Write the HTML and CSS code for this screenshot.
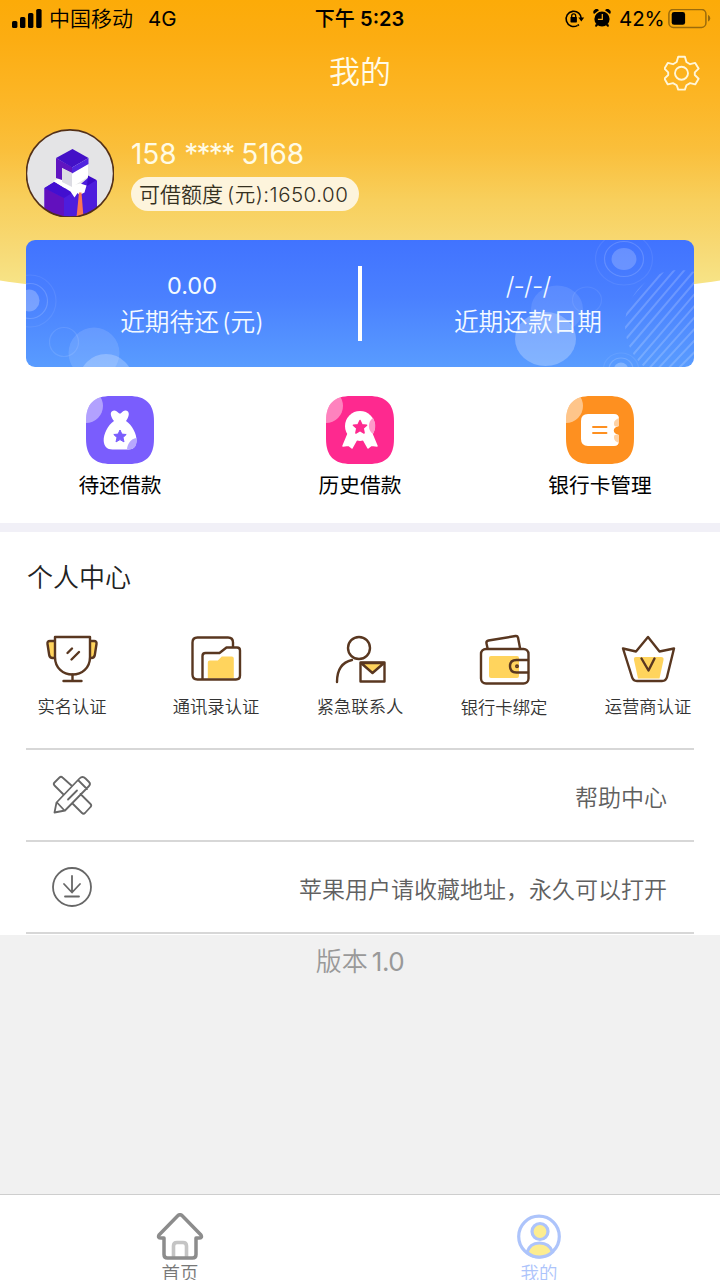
FILE: index.html
```html
<!DOCTYPE html>
<html lang="zh-CN">
<head>
<meta charset="utf-8">
<title>我的</title>
<link rel="stylesheet" href="styles.css">
</head>
<body>
<div class="screen">
  <header class="hero">
    <div class="status">
      <div class="status-left">
        <svg class="signal" viewBox="0 0 30 20"><rect x="0" y="12" width="5.400" height="7" rx="1.600"/><rect x="8" y="8" width="5.400" height="11" rx="1.600"/><rect x="16" y="4" width="5.400" height="15" rx="1.600"/><rect x="24.200" y="0" width="5.400" height="19" rx="1.600"/></svg>
        <span class="carrier">中国移动</span><span class="network">4G</span>
      </div>
      <div class="clock">下午 <b>5:23</b></div>
      <div class="status-right">
        <svg class="lock" viewBox="564 9 22 20"><path d="M577.300 25.600a7.600 7.600 0 1 1 4-6.500M579 24.600l-1.500.9" fill="none" stroke="#000" stroke-width="1.600"/><path d="M578.400 17.400h5.800l-2.900 4z"/><rect x="570.500" y="17" width="6.400" height="5.400" rx=".6"/><path d="M571.700 17.500v-1.600a2 2 0 0 1 4 0v1.600" fill="none" stroke="#000" stroke-width="1.300"/></svg>
        <svg class="alarm" viewBox="593 8.500 18 20"><circle cx="602" cy="18.500" r="7.600"/><path d="M594 13.500a3 3 0 0 1 5-3.700zM610 13.500a3 3 0 0 0-5-3.700zM596 23l2 2-2 1.600-1-1zM608 23l-2 2 2 1.600 1-1z"/><path d="M602.300 13.600v5.300h-4.400" fill="none" stroke="#fcae12" stroke-width="1.200"/></svg>
        <span class="percent">42%</span>
        <svg class="battery" viewBox="668 9 43 20"><rect x="668.900" y="9.400" width="37" height="18" rx="4.500" fill="none" stroke="#9b6b0b" stroke-width="1.500"/><rect x="671.700" y="12" width="13.400" height="12.800" rx="2.400"/><path d="M708 15v6.500c1.400-.6 2.200-1.800 2.200-3.200s-.8-2.700-2.200-3.300z" fill="#9b6b0b"/></svg>
      </div>
    </div>
    <div class="titlebar">
      <h1>我的</h1>
      <svg class="gear" viewBox="664 55 36 37"><g fill="none" stroke="#fff6d8" stroke-width="1.900" stroke-linejoin="round"><path d="M678.200 56.800h6.700l1.500 5.200 3.700 2.200 5.100-1.300 3.400 5.700-3.800 3.800v2.600l3.800 3.700-3.400 5.700-5.100-1.300-3.700 2.200-1.500 4.300h-6.700l-1.500-4.300-3.700-2.200-5.200 1.300-3.300-5.700 3.700-3.700v-2.600l-3.700-3.800 3.300-5.700 5.200 1.300 3.700-2.200z"/><circle cx="681.500" cy="73.200" r="6.500"/></g></svg>
    </div>
    <div class="profile">
      <svg class="avatar" viewBox="26 129 88 88"><defs><clipPath id="face"><circle cx="70" cy="173.500" r="44"/></clipPath></defs><g clip-path="url(#face)"><rect x="26" y="129" width="88" height="88" fill="#e4e4e6"/><path d="M44.500 188l10-6 10 6 14-2 10-8.500 8.500 3v38H44.500z" fill="#4d1ddd"/><path d="M44.500 188l19.500 10v20H44.500z" fill="#6210be"/><path d="M44.500 188l9.500-6 18 11-8 5z" fill="#420fd0"/><path d="M88 175.500l8.500 4.500-9.500 6z" fill="#3c0ac8"/><path d="M53.500 181l6-3 14 7 7-1.500 6 2-2 7-5 2.500-2-2-3 4.500-4-6z" fill="#fff"/><path d="M79 192.500h2.500l2 25h-7z" fill="#fb7652"/><path d="M56 158l16 9v6l-10-5v12l-6-2z" fill="#6015c0"/><path d="M62 168l10 5v14l-10-5z" fill="#dcdce3"/><path d="M72 173l16-9v13l-16 10z" fill="#fff"/><path d="M56 158l16.500-9 16 9-16.500 9.500z" fill="#4310c7"/><path d="M72 167.500l16.500-9.500v6L72 173.500z" fill="#5125df"/></g><circle cx="70" cy="173.500" r="43.600" fill="none" stroke="#543016" stroke-width="1.600"/></svg>
      <div class="identity">
        <div class="phone">158 <span class="mask">****</span> 5168</div>
        <div class="quota"><span>可借额度</span><span class="quota-num">(元):1650.00</span></div>
      </div>
    </div>
  </header>

  <section class="card">
    <svg class="bubbles" viewBox="26 240 668 127" fill="#fff"><g fill="none" stroke="#fff" stroke-width="1.200"><g stroke-opacity=".16"><circle cx="30" cy="301" r="17.500"/><circle cx="64" cy="342" r="14.500" stroke-opacity=".1"/><ellipse cx="624" cy="259" rx="19.500" ry="17.500"/><ellipse cx="621" cy="369" rx="12" ry="11"/></g><g stroke-opacity=".08"><circle cx="30" cy="301" r="26"/><ellipse cx="624" cy="259" rx="28.500" ry="26"/><ellipse cx="587" cy="300" rx="14.500" ry="13"/><ellipse cx="621" cy="369" rx="17.500" ry="16"/></g></g><ellipse cx="29" cy="300.500" rx="10.500" ry="11" opacity=".25"/><circle cx="94" cy="353" r="25.500" opacity=".12"/><circle cx="106" cy="381" r="27" opacity=".24"/><ellipse cx="557" cy="309" rx="26" ry="23.500" opacity=".1"/><ellipse cx="545.500" cy="339" rx="30.500" ry="27" opacity=".26"/><ellipse cx="624" cy="259" rx="12.500" ry="11" opacity=".2"/><ellipse cx="621" cy="369" rx="7" ry="6.500" opacity=".25"/><clipPath id="disc"><ellipse cx="680" cy="325" rx="55" ry="55"/></clipPath><path clip-path="url(#disc)" fill="none" stroke="#fff" stroke-opacity=".19" stroke-width="2" d="M620 310L680 240M620 322L690 240M620 334L700 240M620 346L710 240M620 358L710 252M620 370L710 264M628 372L710 276M637 372L710 288M646 372L710 300M655 372L710 312M665 372L710 324M675 372L710 336M685 372L710 348"/></svg>
    <div class="stat"><strong>0.00</strong><span>近期待还<i>(元)</i></span></div>
    <div class="divider"></div>
    <div class="stat"><strong class="date">/-/-/</strong><span>近期还款日期</span></div>
  </section>

  <nav class="loans">
    <a class="loan"><svg viewBox="0 0 68 68"><clipPath id="tile"><path d="M0 25C0 8 8 0 25 0h18c17 0 25 8 25 25v18c0 17-8 25-25 25H25C8 68 0 60 0 43z"/></clipPath><g clip-path="url(#tile)"><rect width="68" height="68" fill="#7a5dfd"/><circle cx="0" cy="10" r="17" fill="#fff" opacity=".42"/></g><path d="M28 25c-4-5-4.500-10 0-10.500 3-.3 4 3 6 3s2.500-3.500 6-3c4 .6 3.500 6 0 10.500 6 4 11 13 10.500 20-.3 5-3 8.500-8 8.500h-16C21 53.500 18 50 17.700 45 17.300 38 22 29 28 25z" fill="#fff"/><path d="M50.400 42c.8 7-1 11.500-8.500 11.500H41c0-5 4-11 9.400-11.500z" fill="#b7a8fe"/><path d="M34 34l1.900 4.100 4.300.4-3.200 3 1 4.400-4-2.300-4 2.300 1-4.400-3.200-3 4.300-.4z" fill="#7a5dfd" stroke="#7a5dfd" stroke-linejoin="round"/></svg><span>待还借款</span></a>
    <a class="loan"><svg viewBox="0 0 68 68"><g clip-path="url(#tile)"><rect width="68" height="68" fill="#fe298f"/><circle cx="0" cy="10" r="17" fill="#fff" opacity=".42"/></g><path d="M22 38l-5 12 5.500-.8L26 52l5-9h6l5 9 3.500-2.800L51 50l-5-12z" fill="#fff" stroke="#fff" stroke-width="1.500" stroke-linejoin="round"/><circle cx="34" cy="30" r="15" fill="#fff"/><path d="M47 22c3 5 3 11 0 16-5-3-6-12 0-16z" fill="#fe9aca"/><path d="M34 24.500l2 4.200 4.600.5-3.400 3.100.9 4.700-4.100-2.400-4.100 2.400.9-4.700-3.400-3.100 4.600-.5z" fill="#fe298f" stroke="#fe298f" stroke-width="1.500" stroke-linejoin="round"/></svg><span>历史借款</span></a>
    <a class="loan"><svg viewBox="0 0 68 68"><g clip-path="url(#tile)"><rect width="68" height="68" fill="#fe9020"/><circle cx="0" cy="10" r="17" fill="#fff" opacity=".48"/></g><path d="M22 18h26q5 0 5 5v7c-7 1-7 8 0 9v6q0 5-5 5H22q-7 0-7-7V25q0-7 7-7z" fill="#fff"/><path d="M53 22v8c-5 1-5 0-5-3 0-2 2-4 5-5zM53 47v-8c-5-1-5 0-5 3 0 2 2 4 5 5z" fill="#fed2a5"/><path d="M27 31h13.500M27 37h13.500" stroke="#fe9020" stroke-width="1.900" stroke-linecap="round"/></svg><span>银行卡管理</span></a>
  </nav>

  <section class="center">
    <h2>个人中心</h2>
    <div class="services">
      <a class="service"><svg viewBox="44 632 56 54"><g class="brown"><path d="M54 641h-4q-3 0-2.500 3l1.700 11q.5 3 3.500 3h2M90 641h4q3 0 2.500 3l-1.700 11q-.5 3-3.500 3h-2" fill="#ffd45d"/><path d="M55 637h35v20c0 11-8 17.500-17.500 17.500S55 668 55 657z" fill="#fff"/><path d="M72.500 674.500v6M63.500 681h18M67.500 653l4.500-4.500M71.500 659.500l7.500-7.500"/></g></svg><span>实名认证</span></a>
      <a class="service"><svg viewBox="188.500 632.500 56 54"><path d="M208.300 663q0-2 2-2h8l4-4h10q2 0 2 2v20h-26z" fill="#ffd45d"/><path class="brown" d="M233.500 647v-4q0-5-5-5H198q-5 0-5 5v32q0 5 5 5h38.500q4 0 4-4v-25q0-3-3-3H227l-7 5.500h-14q-3 0-3 3V679"/></svg><span>通讯录认证</span></a>
      <a class="service"><svg viewBox="332 632 56 54"><g class="brown"><circle cx="359" cy="648" r="11"/><path d="M337 682c0-13 6-20 15-22"/><path d="M361 663h23l-11.500 10z" fill="#ffd45d"/><path d="M360.500 662.500h24v19h-24z"/></g></svg><span>紧急联系人</span></a>
      <a class="service shifted"><svg viewBox="476 632 56 54"><rect x="489" y="656" width="30" height="22" rx="2" fill="#ffd45d"/><g class="brown"><rect x="481" y="649" width="47.500" height="34.500" rx="5"/><path d="M487.500 648l-1-4.500q-.5-2.500 2-3l27-4.500q2-.3 2.500 1.500l2 10.500M528 660h-11.500q-6.500 0-6.500 6.200t6.500 6.300H528" /><circle cx="517" cy="666.300" r=".8"/></g></svg><span>银行卡绑定</span></a>
      <a class="service"><svg viewBox="620 632 56 54"><path d="M636 657h25q3 0 2.500 3l-4 18.500h-21.500l-4-18.500q-.6-3 2-3z" fill="#ffd45d"/><path class="brown" d="M623 648.500l13 3 12-14.500 11.500 14.500 14.500-3-7 28.500q-1 4-5 4h-25q-4 0-5-4zM641.500 658.500l7 12 6-12"/></svg><span>运营商认证</span></a>
    </div>
    <div class="rows">
      <a class="row"><svg viewBox="50 773 44 44"><g class="line"><path d="M63 794l-8.500-8.500q-1.500-1.500 0-3l5-5q1.500-1.500 3 0L72 786M80.500 794l10 10q1.500 1.500 0 3l-5.500 6q-1.500 1.500-3 0l-9.500-9.500M56.500 802.500L79.500 778.500q3-3 6 0l3.500 3.500q2 2 0 4L65 810.500l-10.500 2zM57 802.500l7.500 8M78.500 780.500l8.500 8.500M68 799.500l9-9"/></g></svg><span>帮助中心</span></a>
      <a class="row"><svg viewBox="50 865 44 44"><g class="line"><circle cx="72" cy="887" r="19"/><path d="M72 876v16M64 884l8 8.500 8-8.500M65 896.500h14"/></g></svg><span>苹果用户请收藏地址，永久可以打开</span></a>
    </div>
  </section>
  <div class="version">版本<span>1.0</span></div>
  <footer class="tabs">
    <a class="tab"><svg viewBox="156 1213 48 48"><path d="M173.500 1258v-12q0-3.500 3.500-3.500h6q3.500 0 3.500 3.500v12" fill="none" stroke="#c4c4c4" stroke-width="3.600"/><path d="M177.500 1216q2.500-2.500 5 0l18.500 19q1.500 3-2 3h-3v16.500q0 3.500-3.500 3.500h-25q-3.500 0-3.500-3.500V1238h-3q-3.500 0-2-3z" fill="none" stroke="#8c8c8c" stroke-width="3.500" stroke-linejoin="round"/></svg><span>首页</span></a>
    <a class="tab active"><svg viewBox="515 1213 48 48"><g fill="#fced91" stroke="#adc4fb" stroke-width="3.200"><circle cx="539" cy="1236.500" r="20.300" fill="none"/><circle cx="540" cy="1231.500" r="8"/><path d="M527 1252.500c2-7 7-9.500 12.500-9.500s10.500 2 13 9c-7 6.500-18 7-25.500.5z"/></g></svg><span>我的</span></a>
  </footer>
</div>
</body>
</html>
```
FILE: styles.css
```css
* { box-sizing: border-box; }
body { margin: 0; background: #f1f1f1; font-family: Inter, "Noto Sans CJK SC", sans-serif; }
svg { display: block; flex: none; }
h1, h2 { margin: 0; font-weight: 350; }
.screen { position: relative; z-index: 0; width: 720px; height: 1280px; overflow: hidden; display: flex; flex-direction: column; background: #f1f1f1; }
.screen::before { content: ""; position: absolute; inset: 0 0 auto; height: 306px; background: linear-gradient(#fcab08 0, #fcad12 40px, #fcb626 100px, #fabf3b 150px, #f8cf5c 200px, #f7da76 250px, #f7e487 285px); clip-path: ellipse(900px 306px at 50% 0); }
.screen::after { content: ""; position: absolute; inset: 240px 0 auto; height: 284px; background: #fff; z-index: -1; }
.hero { position: relative; height: 240px; }
.status { display: grid; grid-template-columns: 1fr auto 1fr; height: 37px; align-items: center; padding: 0 9px 0 12px; color: #000; font-size: 20.500px; line-height: 36px; }
.status-left, .status-right { display: flex; align-items: center; }
.status-right { justify-content: flex-end; }
.signal { width: 30px; height: 20px; margin-right: 7px; }
.carrier { font-size: 21px; font-weight: 350; }
.network { margin-left: 15px; }
.clock { font-weight: 500; font-size: 20px; position: relative; left: -2px; white-space: nowrap; }
.clock b { font-weight: 600; }
.lock { width: 22px; height: 20px; margin-right: 7px; }
.alarm { width: 18px; height: 20px; margin-right: 8px; }
.percent { width: 45px; margin-right: 4px; letter-spacing: -.1px; }
.battery { width: 43px; height: 20px; }
.titlebar { height: 72px; display: grid; grid-template-columns: 36px 1fr 36px; align-items: center; padding: 0 20px; }
.titlebar h1 { grid-column: 2; text-align: center; color: #fffbe9; font-size: 31px; line-height: 68px; margin-top: -3px; }
.gear { width: 36px; height: 37px; }
.profile { display: flex; padding: 20px 26px 0; gap: 17px; }
.avatar { width: 88px; height: 88px; }
.identity { display: flex; flex-direction: column; align-items: flex-start; padding-top: 6px; }
.phone { color: #fffbe5; font-size: 28px; line-height: 38px; height: 42px; letter-spacing: -.1px; white-space: nowrap; }
.mask { letter-spacing: -1.700px; }
.quota { width: 228px; height: 34px; border-radius: 17px; background: #fdf4dc; color: #35301f; padding-left: 8px; font-size: 21px; line-height: 36px; white-space: nowrap; display: flex; gap: 4px; font-weight: 350; }
.quota-num { font-size: 20.500px; letter-spacing: .5px; }
.card { position: relative; flex: none; height: 127px; margin: 0 26px; border-radius: 9px; overflow: hidden; display: grid; grid-template-columns: 1fr 4px 1fr; align-items: center; background: linear-gradient(#4173ff, #4a80ff 45%, #599cff); color: #f4faff; }
.bubbles { position: absolute; inset: 0; width: 668px; height: 127px; }
.stat { position: relative; display: flex; flex-direction: column; align-items: center; font-size: 24.700px; font-weight: 350; line-height: 37px; padding-top: 2px; }
.stat strong { font-size: 23.500px; font-weight: 400; line-height: 36px; }
.stat .date { font-weight: 350; font-size: 25px; letter-spacing: -.8px; }
.stat i { font-style: normal; margin-left: 3px; }
.divider { height: 75px; background: #fff; }
.loans { height: 165px; flex: none; display: grid; grid-template-columns: repeat(3, 1fr); padding-top: 29px; border-bottom: 9px solid #f1f0f7; }
.loan { display: flex; flex-direction: column; align-items: center; color: #000; font-size: 20.700px; line-height: 43px; }
.loan svg { width: 68px; height: 68px; }
.center { height: 403px; background: #fff; }
.center h2 { padding: 26px 27px 0; font-size: 26px; line-height: 40px; color: #222; }
.services { display: grid; grid-template-columns: repeat(5, 1fr); height: 116px; margin-top: 34px; }
.service { display: flex; flex-direction: column; align-items: center; color: #333; font-size: 17.300px; font-weight: 350; line-height: 42px; }
.service svg { width: 56px; height: 54px; }
.shifted { line-height: 44px; }
.brown { fill: none; stroke: #593720; stroke-width: 2.400; stroke-linejoin: round; stroke-linecap: round; }
.rows { margin: 0 26px; border-top: 2px solid #d7d7d7; }
.row { display: flex; justify-content: space-between; height: 92px; padding: 0 27px 0 24px; align-items: center; border-bottom: 2px solid #d7d7d7; color: #606060; font-size: 23px; font-weight: 350; }
.row svg { width: 44px; height: 44px; }
.row span { line-height: 42px; padding-top: 5px; }
.line { fill: none; stroke: #676767; stroke-width: 1.800; stroke-linejoin: round; stroke-linecap: round; }
.version { height: 259px; color: #999; font-size: 26px; line-height: 54px; text-align: center; font-weight: 350; }
.version span { margin-left: 4px; font-weight: 400; letter-spacing: -.5px; }
.tabs { height: 86px; flex: none; background: #fff; border-top: 1px solid #cecece; display: grid; grid-template-columns: 1fr 1fr; }
.tab { display: flex; flex-direction: column; align-items: center; padding-top: 18px; color: #777; font-size: 18.500px; line-height: 24px; font-weight: 350; }
.tab svg { width: 48px; height: 48px; }
.active { color: #adc4fb; padding-right: 2px; }
```
